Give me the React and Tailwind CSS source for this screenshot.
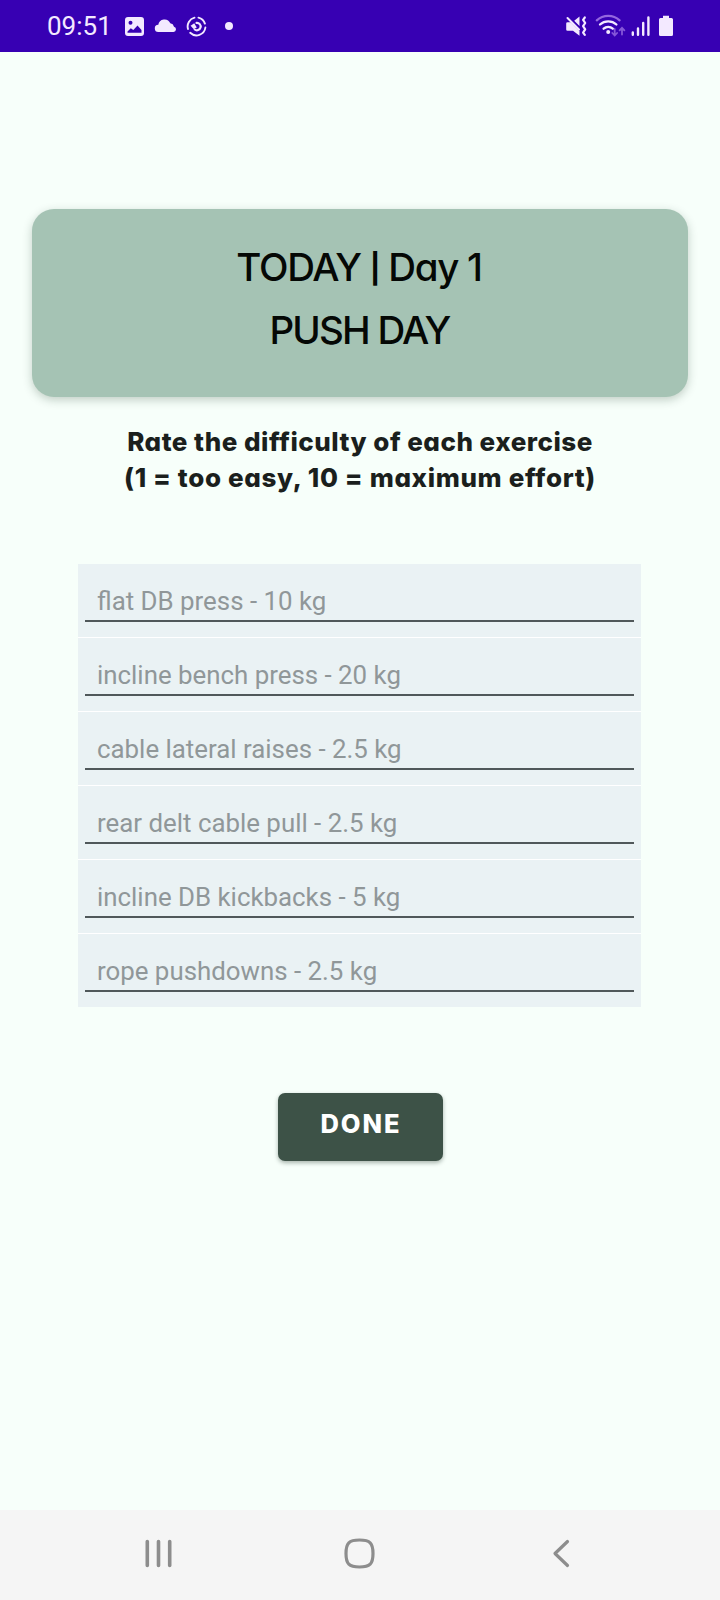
const exercises = [
  "flat DB press - 10 kg",
  "incline bench press - 20 kg",
  "cable lateral raises - 2.5 kg",
  "rear delt cable pull - 2.5 kg",
  "incline DB kickbacks - 5 kg",
  "rope pushdowns - 2.5 kg",
];

function StatusBar() {
  return (
    <header className="flex h-[52px] shrink-0 items-center justify-between bg-[#3700b3] pl-[47px] pr-[46px] text-[#f3e9ff]">
      <div className="flex h-full items-center">
        <span className="w-[77px] font-['Roboto',sans-serif] text-[26px] leading-[52px]">09:51</span>
        <svg width="22" height="24" viewBox="124 14 22 24">
          <path fill="currentColor" fillRule="evenodd" d="M128 17h13a3 3 0 0 1 3 3v13a3 3 0 0 1-3 3h-13a3 3 0 0 1-3-3V20a3 3 0 0 1 3-3ZM127.500 32.700h14V30l-4-4.500-4.200 4.500-2.500-1.800-3.300 3.300ZM130.500 20.800a2 2 0 1 0 0 4 2 2 0 0 0 0-4Z" />
        </svg>
        <svg className="ml-[8px]" width="24" height="24" viewBox="154 14 24 24">
          <path fill="currentColor" d="M158.500 32a3.600 3.600 0 0 1-.2-7.200 6.300 6.300 0 0 1 12-1.600 4.500 4.500 0 0 1 3.700 3.500 2.700 2.700 0 0 1-.5 5.300Z" />
        </svg>
        <svg className="ml-[8px]" width="22" height="24" viewBox="186 14 22 24">
          <g fill="none" stroke="currentColor" strokeWidth="1.900" strokeLinecap="round">
            <path d="M198.500 17.600a9 9 0 0 1 6.400 6M205.400 27.500a9 9 0 0 1-15.200 5.300M188 29a9 9 0 0 1 6.500-11.300" />
            <path strokeWidth="2.200" d="M196.500 22.900a3.700 3.700 0 1 1-1.800 6.600" />
          </g>
          <path fill="currentColor" d="M190.600 25.700l3.600-2.500 2.600 4.200-3.200 1.500Z" />
        </svg>
        <span className="ml-[17px] size-2 rounded-full bg-[#f3e9ff]" />
      </div>
      <div className="flex h-full items-center">
        <svg width="24" height="24" viewBox="565 14 24 24">
          <path fill="currentColor" d="M567.500 22.300h3.300l8.700 8.700v4.800l-6.500-5h-5.500a1.300 1.300 0 0 1-1.300-1.300v-5.900a1.300 1.300 0 0 1 1.300-1.300ZM579.500 16.500v9.500l-5.300-5.200Z" />
          <path stroke="currentColor" strokeWidth="2" strokeLinecap="round" d="M567.500 18 579 29.500" />
          <path fill="none" stroke="currentColor" strokeWidth="2.200" strokeLinecap="round" strokeLinejoin="round" d="M584.800 17.500l-1.700 2.300 2.100 3.200-2.100 3.200 2.100 3.200-2.100 3.200 1.700 2.200" />
        </svg>
        <svg className="ml-[6px]" width="32" height="24" viewBox="595 14 32 24">
          <g fill="none" stroke="currentColor" strokeWidth="2.300" strokeLinecap="round">
            <path stroke="#9466df" d="M596.800 20.300a17 17 0 0 1 22.800 0" />
            <path d="M600 24.500a12.200 12.200 0 0 1 16.400 0M603.600 28.700a7 7 0 0 1 9.200 0" />
            <path stroke="#8557d8" strokeWidth="1.800" d="M614.700 29v6M612.300 33l2.400 2.500 2.400-2.500M622 34.500v-6.500M619.600 30.300l2.400-2.500 2.400 2.500" />
          </g>
          <circle cx="608.200" cy="32" r="2" fill="currentColor" />
        </svg>
        <svg className="ml-[4px]" width="22" height="24" viewBox="631 14 22 24">
          <path fill="none" stroke="currentColor" strokeWidth="2.400" strokeLinecap="round" d="M632.800 32.500v2.300M638 28.500v6.300M643.200 23v11.800M648.400 17.500v17.300" />
        </svg>
        <svg className="ml-[5px]" width="16" height="24" viewBox="658 14 16 24">
          <path fill="currentColor" d="M663 15.800h6v2.200h2.500a1.500 1.500 0 0 1 1.500 1.500v15a1.500 1.500 0 0 1-1.500 1.500h-11a1.500 1.500 0 0 1-1.500-1.500v-15a1.500 1.500 0 0 1 1.500-1.500h2.500Z" />
        </svg>
      </div>
    </header>
  );
}

function NavigationBar() {
  return (
    <nav className="flex h-[90px] shrink-0 items-center justify-between bg-[#f5f5f5] px-[141px] pb-[4px]">
      <button aria-label="Recents" className="w-[34px]">
        <svg width="34" height="34" viewBox="141 1536 34 34">
          <path stroke="#8d8d8d" strokeWidth="3.600" strokeLinecap="round" d="M147.300 1541.500v24M158.500 1541.500v24M169.700 1541.500v24" />
        </svg>
      </button>
      <button aria-label="Home" className="w-[34px]">
        <svg width="34" height="34" viewBox="343 1536 34 34">
          <path fill="none" stroke="#8d8d8d" strokeWidth="3.200" d="M359.500 1540c10.500 0 13.500 3 13.500 13.500s-3 13.500-13.500 13.500-13.500-3-13.500-13.500 3-13.500 13.500-13.500Z" />
        </svg>
      </button>
      <button aria-label="Back" className="w-[34px]">
        <svg width="34" height="34" viewBox="545 1536 34 34">
          <path fill="none" stroke="#8d8d8d" strokeWidth="3.200" strokeLinecap="round" strokeLinejoin="round" d="M567.500 1541.500 555 1553.500l12.500 12" />
        </svg>
      </button>
    </nav>
  );
}

export default function App() {
  return (
    <div className="flex h-[1600px] w-[720px] flex-col overflow-hidden bg-[#f7fffa]">
      <StatusBar />
      <main className="flex flex-1 flex-col items-center font-['Inter',sans-serif] [font-feature-settings:'cv11']">
        <section className="mt-[157px] flex h-[188px] w-[656px] flex-col items-center rounded-[22px] bg-[#a5c3b4] pt-[27px] text-[38.500px] font-medium leading-[63px] text-[#050805] shadow-[0_3px_10px_rgba(30,60,45,0.25)]">
          <h1 className="h-[63px] whitespace-nowrap pr-[2px] tracking-[-1.300px]">
            TODAY <span className="align-[2px] text-[29px] font-bold leading-none">|</span> Day 1
          </h1>
          <h2 className="whitespace-nowrap pr-[1px] tracking-[-1.800px]">PUSH DAY</h2>
        </section>
        <div className="mt-[27px] flex flex-col items-center text-[26px] font-extrabold leading-[36px] text-[#1b1f1d]">
          <p className="whitespace-nowrap tracking-[0.500px]">Rate the difficulty of each exercise</p>
          <p className="whitespace-nowrap tracking-[0.640px]">(1 = too easy, 10 = maximum effort)</p>
        </div>
        <ul className="mr-px mt-[68px] flex w-[563px] flex-col gap-px bg-white">
          {exercises.map((exercise) => (
            <li key={exercise} className="flex h-[73px] flex-col bg-[#eaf2f4] px-[7px] pt-[17px]">
              <div className="flex h-[41px] items-center border-b-2 border-[#50585a] pl-[12px] font-['Roboto',sans-serif] text-[25.850px] leading-[40px] text-[#909799] [font-feature-settings:normal]">
                <span className="whitespace-nowrap pt-px">{exercise}</span>
              </div>
            </li>
          ))}
        </ul>
        <button className="mt-[86px] flex h-[68px] w-[165px] justify-center rounded-[7px] bg-[#3d5247] pl-[2px] pt-[13px] text-[25.500px] font-extrabold leading-[36px] tracking-[2px] text-white shadow-[0_2px_4px_rgba(20,40,30,0.35)]">
          DONE
        </button>
      </main>
      <NavigationBar />
    </div>
  );
}
